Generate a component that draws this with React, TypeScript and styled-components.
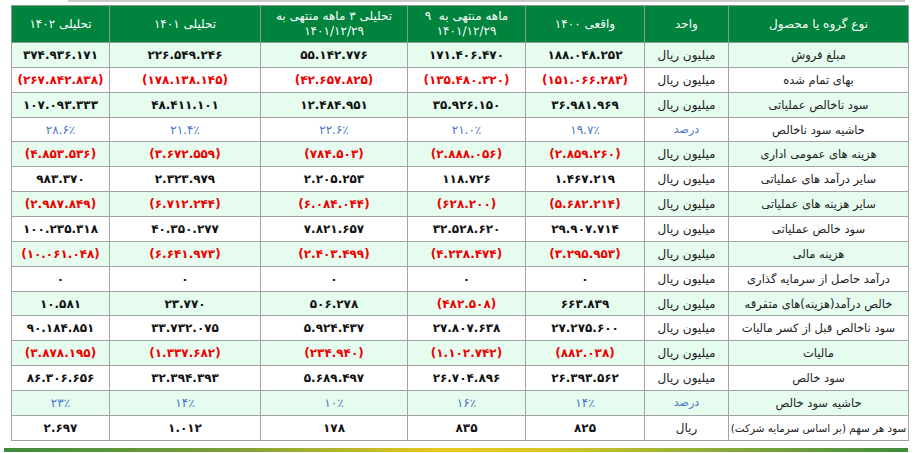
import React from "react";
import styled, { createGlobalStyle } from "styled-components";

const GlobalStyle = createGlobalStyle`
  html, body { margin: 0; padding: 0; background: #ffffff; }
  body { font-family: "DejaVu Sans", "Noto Sans", sans-serif; }
  *, *::before, *::after { box-sizing: border-box; }
`;

const Page = styled.div`
  width: 915px;
  height: 453px;
  display: flex;
  flex-direction: column;
  overflow: hidden;
`;

const TopRule = styled.div`
  height: 2px;
  margin: 0 10px 0 68px;
  background: #c9c9c9;
`;

const TableWrap = styled.div`
  padding: 3px 7px 0 11px;
`;

const Table = styled.table`
  direction: rtl;
  width: 897px;
  border-collapse: collapse;
  table-layout: fixed;
  border: 1px solid #a3a3a3;
`;

const HeadCell = styled.th<{ $w: number }>`
  width: ${(p) => p.$w}px;
  height: 37px;
  background: #00843d;
  color: #ffffff;
  font-weight: normal;
  font-size: 12px;
  line-height: 15px;
  text-align: center;
  vertical-align: middle;
  border: 1px solid #8a9a8f;
  padding: 0 2px;
  white-space: nowrap;
  overflow: hidden;
`;

const Row = styled.tr<{ $alt: boolean }>`
  height: 24.87px;
  background: ${(p) => (p.$alt ? "#e5fcef" : "#ffffff")};
`;

const LabelCell = styled.td<{ $small: boolean }>`
  border: 1px solid #a3a3a3;
  text-align: center;
  font-size: ${(p) => (p.$small ? "10.4px" : "11.5px")};
  color: #222222;
  white-space: nowrap;
  padding: 0 1px;
  overflow: hidden;
`;

const UnitCell = styled.td<{ $blue: boolean }>`
  border: 1px solid #a3a3a3;
  text-align: center;
  font-size: ${(p) => (p.$blue ? "11px" : "12px")};
  color: ${(p) => (p.$blue ? "#4a74c9" : "#222222")};
  white-space: nowrap;
  padding: 0 2px;
`;

type Tone = "black" | "red" | "blue";

const NumCell = styled.td<{ $tone: Tone }>`
  border: 1px solid #a3a3a3;
  direction: ltr;
  text-align: center;
  font-size: 12px;
  font-weight: ${(p) => (p.$tone === "blue" ? "normal" : "bold")};
  color: ${(p) =>
    p.$tone === "red" ? "#ee0000" : p.$tone === "blue" ? "#4a74c9" : "#111111"};
  white-space: nowrap;
  padding: 0 2px;
`;

const BottomBar = styled.div`
  margin: 7px 7px 0 4px;
  height: 4px;
  background: linear-gradient(
    to right,
    #3f8a3c 0%,
    #7a9f38 25%,
    #e6c81e 48%,
    #d8c824 60%,
    #86a83a 80%,
    #3f8a3c 100%
  );
`;

const widths = [180, 84, 119, 118, 147, 151, 98];

const headers: React.ReactNode[] = [
  "نوع گروه یا محصول",
  "واحد",
  "واقعی ۱۴۰۰",
  <>
    ماهه منتهی به &nbsp;۹
    <br />
    ۱۴۰۱/۱۲/۲۹
  </>,
  <>
    تحلیلی ۳ ماهه منتهی به
    <br />
    ۱۴۰۱/۱۲/۲۹
  </>,
  "تحلیلی ۱۴۰۱",
  "تحلیلی ۱۴۰۲",
];

type RowData = { label: string; unit: string; tone: Tone; values: string[] };

const MR = "میلیون ریال";
const PCT = "درصد";

const rows: RowData[] = [
  { label: "مبلغ فروش", unit: MR, tone: "black", values: ["۱۸۸.۰۴۸.۲۵۲", "۱۷۱.۴۰۶.۴۷۰", "۵۵.۱۴۲.۷۷۶", "۲۲۶.۵۴۹.۲۴۶", "۳۷۴.۹۳۶.۱۷۱"] },
  { label: "بهای تمام شده", unit: MR, tone: "red", values: ["(۱۵۱.۰۶۶.۲۸۳)", "(۱۳۵.۴۸۰.۳۲۰)", "(۴۲.۶۵۷.۸۲۵)", "(۱۷۸.۱۳۸.۱۴۵)", "(۲۶۷.۸۴۲.۸۳۸)"] },
  { label: "سود ناخالص عملیاتی", unit: MR, tone: "black", values: ["۳۶.۹۸۱.۹۶۹", "۳۵.۹۲۶.۱۵۰", "۱۲.۴۸۴.۹۵۱", "۴۸.۴۱۱.۱۰۱", "۱۰۷.۰۹۳.۳۳۳"] },
  { label: "حاشیه سود ناخالص", unit: PCT, tone: "blue", values: ["۱۹.۷٪", "۲۱.۰٪", "۲۲.۶٪", "۲۱.۴٪", "۲۸.۶٪"] },
  { label: "هزینه های عمومی اداری", unit: MR, tone: "red", values: ["(۲.۸۵۹.۲۶۰)", "(۲.۸۸۸.۰۵۶)", "(۷۸۴.۵۰۳)", "(۳.۶۷۲.۵۵۹)", "(۴.۸۵۳.۵۳۶)"] },
  { label: "سایر درآمد های عملیاتی", unit: MR, tone: "black", values: ["۱.۴۶۷.۲۱۹", "۱۱۸.۷۲۶", "۲.۲۰۵.۲۵۳", "۲.۳۲۳.۹۷۹", "۹۸۳.۳۷۰"] },
  { label: "سایر هزینه های عملیاتی", unit: MR, tone: "red", values: ["(۵.۶۸۲.۲۱۴)", "(۶۲۸.۲۰۰)", "(۶.۰۸۴.۰۴۴)", "(۶.۷۱۲.۲۴۴)", "(۲.۹۸۷.۸۴۹)"] },
  { label: "سود خالص عملیاتی", unit: MR, tone: "black", values: ["۲۹.۹۰۷.۷۱۴", "۳۲.۵۲۸.۶۲۰", "۷.۸۲۱.۶۵۷", "۴۰.۳۵۰.۲۷۷", "۱۰۰.۲۳۵.۳۱۸"] },
  { label: "هزینه مالی", unit: MR, tone: "red", values: ["(۳.۲۹۵.۹۵۳)", "(۴.۲۳۸.۴۷۴)", "(۲.۴۰۳.۴۹۹)", "(۶.۶۴۱.۹۷۳)", "(۱۰.۰۶۱.۰۴۸)"] },
  { label: "درآمد حاصل از سرمایه گذاری", unit: MR, tone: "black", values: ["۰", "۰", "۰", "۰", "۰"] },
  { label: "خالص درآمد(هزینه)های متفرقه", unit: MR, tone: "black", values: ["۶۶۳.۸۳۹", "(۴۸۲.۵۰۸)", "۵۰۶.۲۷۸", "۲۳.۷۷۰", "۱۰.۵۸۱"] },
  { label: "سود ناخالص قبل از کسر مالیات", unit: MR, tone: "black", values: ["۲۷.۲۷۵.۶۰۰", "۲۷.۸۰۷.۶۳۸", "۵.۹۲۴.۴۳۷", "۳۳.۷۳۲.۰۷۵", "۹۰.۱۸۴.۸۵۱"] },
  { label: "مالیات", unit: MR, tone: "red", values: ["(۸۸۲.۰۳۸)", "(۱.۱۰۲.۷۴۲)", "(۲۳۴.۹۴۰)", "(۱.۳۳۷.۶۸۲)", "(۳.۸۷۸.۱۹۵)"] },
  { label: "سود خالص", unit: MR, tone: "black", values: ["۲۶.۳۹۳.۵۶۲", "۲۶.۷۰۴.۸۹۶", "۵.۶۸۹.۴۹۷", "۳۲.۳۹۴.۳۹۳", "۸۶.۳۰۶.۶۵۶"] },
  { label: "حاشیه سود خالص", unit: PCT, tone: "blue", values: ["۱۴٪", "۱۶٪", "۱۰٪", "۱۴٪", "۲۳٪"] },
  { label: "سود هر سهم (بر اساس سرمایه شرکت)", unit: "ریال", tone: "black", values: ["۸۲۵", "۸۳۵", "۱۷۸", "۱.۰۱۲", "۲.۶۹۷"] },
];

const toneOf = (row: RowData, v: string): Tone => {
  if (row.tone === "blue") return "blue";
  if (v.startsWith("(")) return "red";
  return "black";
};

export default function App() {
  return (
    <Page>
      <GlobalStyle />
      <TopRule />
      <TableWrap>
        <Table>
          <thead>
            <tr>
              {headers.map((h, i) => (
                <HeadCell key={i} $w={widths[i]}>
                  {h}
                </HeadCell>
              ))}
            </tr>
          </thead>
          <tbody>
            {rows.map((r, i) => (
              <Row key={r.label} $alt={i % 2 === 0}>
                <LabelCell $small={r.label.length > 28}>{r.label}</LabelCell>
                <UnitCell $blue={r.unit === PCT}>{r.unit}</UnitCell>
                {r.values.map((v, j) => (
                  <NumCell key={j} $tone={toneOf(r, v)}>
                    {v}
                  </NumCell>
                ))}
              </Row>
            ))}
          </tbody>
        </Table>
      </TableWrap>
      <BottomBar />
    </Page>
  );
}
